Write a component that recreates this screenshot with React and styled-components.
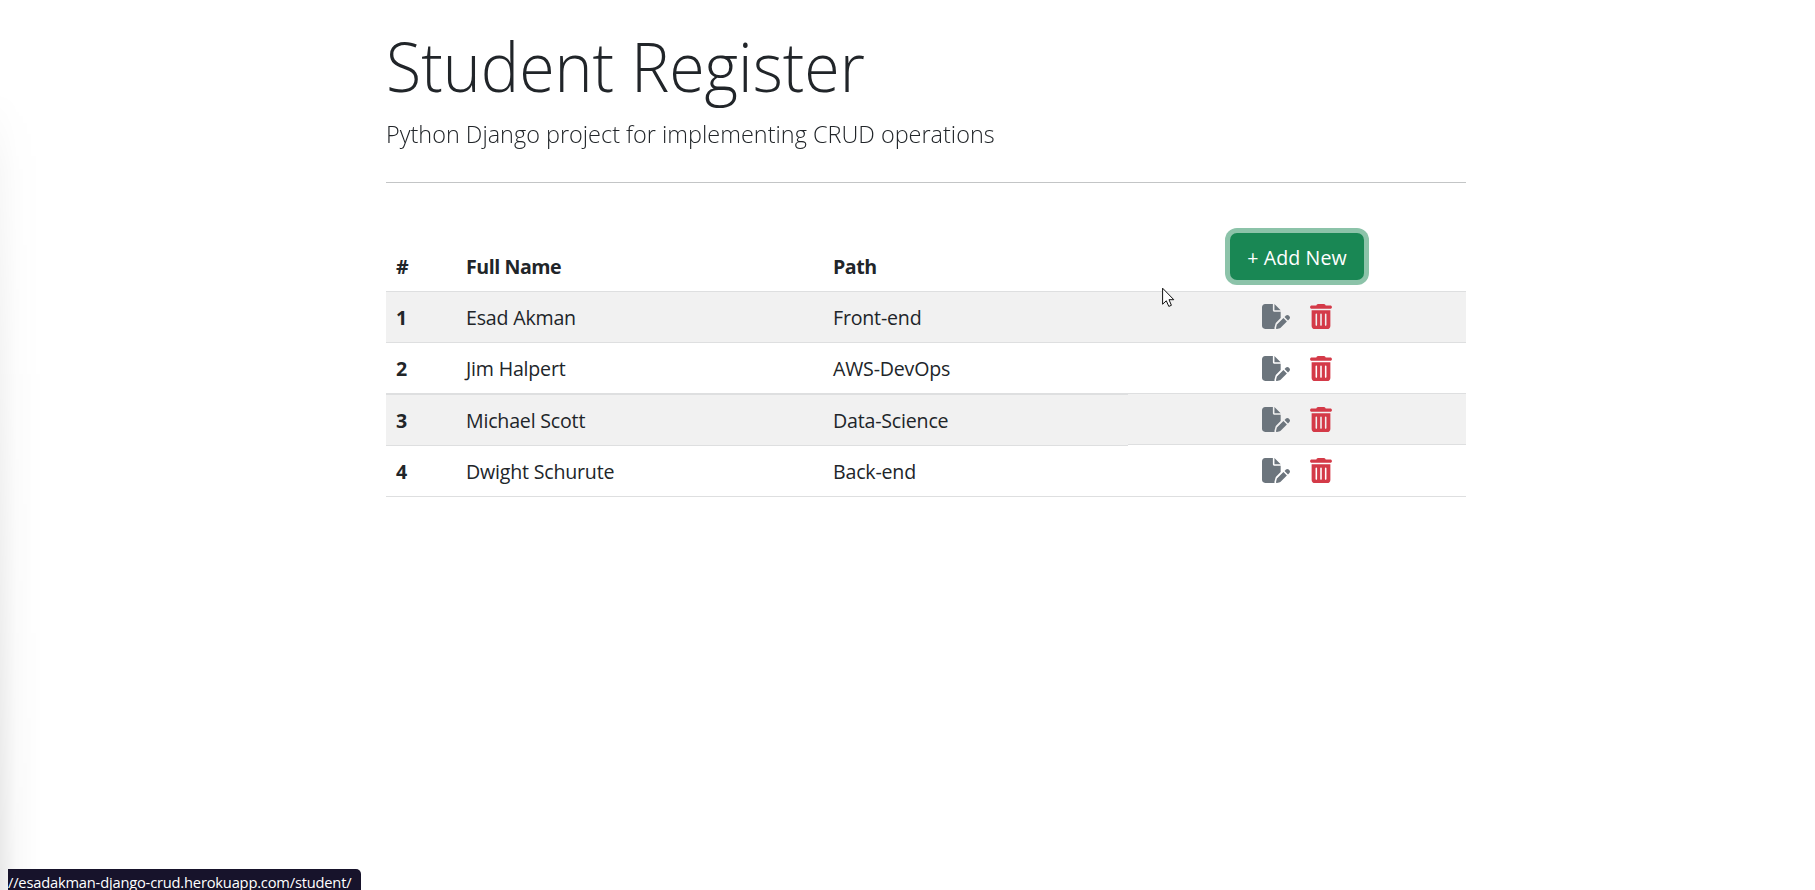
import React from "react";
import styled, { createGlobalStyle } from "styled-components";
import { FaFilePen, FaTrashCan } from "react-icons/fa6";

const GlobalStyle = createGlobalStyle`
  *, *::before, *::after { box-sizing: border-box; }
  body {
    margin: 0;
    background: #fff;
    color: #212529;
    font-family: "Open Sans", "Noto Sans", sans-serif;
    font-size: 19.6px;
    line-height: 30px;
    overflow: hidden;
  }
`;

const Page = styled.div`
  position: relative;
  height: 890px;
  overflow: hidden;
`;

const EdgeShadow = styled.div`
  position: absolute;
  left: 0;
  top: 90px;
  bottom: 0;
  width: 42px;
  background: linear-gradient(to right, rgba(0, 0, 0, 0.09), rgba(0, 0, 0, 0.025) 40%, transparent);
  mask-image: linear-gradient(to bottom, transparent, rgba(0, 0, 0, 0.3) 10%, #000);
`;

const Container = styled.main`
  width: 1080px;
  margin-left: 386px;
  padding-top: 23px;
`;

const Title = styled.h1`
  margin: 0;
  height: 84px;
  font-size: 68.5px;
  font-weight: 300;
  line-height: 85px;
  white-space: nowrap;
  transform: scaleX(0.941);
  transform-origin: left;
`;

const Lead = styled.p`
  margin: 8px 0 0;
  height: 38px;
  font-size: 24.5px;
  font-weight: 300;
  line-height: 38px;
  white-space: nowrap;
  transform: scaleX(0.957);
  transform-origin: left;
`;

const Divider = styled.hr`
  height: 1px;
  margin: 29px 0 39px;
  border: 0;
  background: #c3c5c6;
`;

const Row = styled.div`
  display: grid;
  grid-template-columns: 70px 367px 305px 338px;
  height: ${(p) => p.$height}px;
`;

const Cell = styled.div`
  display: flex;
  align-items: ${(p) => (p.$head ? "flex-end" : "center")};
  padding: ${(p) => (p.$head ? "0 10px 9px" : "2px 10px 0")};
  border-bottom: 1px solid #dedfe0;
  border-top: ${(p) => (p.$ruled ? "1px solid #dedfe0" : "0")};
  background: ${(p) => (p.$striped ? "#f1f1f1" : "#fff")};
  font-weight: ${(p) => (p.$bold ? 700 : 400)};
  letter-spacing: ${(p) => (p.$bold ? "-0.45px" : "-0.2px")};
  white-space: nowrap;
`;

const Actions = styled.div`
  display: flex;
  justify-content: center;
  align-items: flex-start;
  gap: 20px;
  height: ${(p) => p.$height}px;
  padding-top: ${(p) => (p.$head ? 11 : p.$offset)}px;
  border-bottom: 1px solid #dedfe0;
  background: ${(p) => (p.$striped ? "#f1f1f1" : "#fff")};
`;

const EditIcon = styled(FaFilePen)`
  width: 28px;
  height: 25px;
  color: #6c757d;
`;

const DeleteIcon = styled(FaTrashCan)`
  width: 22px;
  height: 25px;
  color: #d43a48;
`;

const AddButton = styled.button`
  width: 134px;
  height: 47px;
  padding: 3px 0 0;
  border: 0;
  border-radius: 7px;
  background: #198754;
  box-shadow: 0 0 0 5px #8cc3a9;
  color: #fff;
  font: inherit;
  letter-spacing: 0.1px;
`;

const StatusBar = styled.div`
  position: absolute;
  left: 8px;
  bottom: 0;
  width: 353px;
  height: 21px;
  border-top-right-radius: 5px;
  background: #17132b;
  color: #fff;
  font-size: 14.7px;
  line-height: 27px;
  letter-spacing: -0.2px;
  white-space: nowrap;
`;

const Pointer = styled.svg`
  position: absolute;
  left: 1162px;
  top: 287px;
  width: 13px;
  height: 21px;
`;

const STUDENTS = [
  { name: "Esad Akman", path: "Front-end", height: 51, offset: 12 },
  { name: "Jim Halpert", path: "AWS-DevOps", height: 51, offset: 13 },
  { name: "Michael Scott", path: "Data-Science", height: 52, ruled: true, offset: 13 },
  { name: "Dwight Schurute", path: "Back-end", height: 51, offset: 12 },
];

export default function App() {
  return (
    <Page>
      <GlobalStyle />
      <EdgeShadow />
      <Container>
        <Title>Student Register</Title>
        <Lead>Python Django project for implementing CRUD operations</Lead>
        <Divider />
        <Row $height={70}>
          <Cell $head $bold>#</Cell>
          <Cell $head $bold>Full Name</Cell>
          <Cell $head $bold>Path</Cell>
          <Actions $head $height={70}>
            <AddButton>+ Add New</AddButton>
          </Actions>
        </Row>
        {STUDENTS.map(({ name, path, height, ruled, offset }, i) => {
          const striped = i % 2 === 0;
          return (
            <Row key={name} $height={height}>
              <Cell $striped={striped} $ruled={ruled} $bold>{i + 1}</Cell>
              <Cell $striped={striped} $ruled={ruled}>{name}</Cell>
              <Cell $striped={striped} $ruled={ruled}>{path}</Cell>
              <Actions $striped={striped} $height={51} $offset={offset}>
                <EditIcon />
                <DeleteIcon />
              </Actions>
            </Row>
          );
        })}
      </Container>
      <Pointer viewBox="0 0 13 21">
        <path
          d="M0.6 1.2V17.2L4.3 13.8L6.8 19.4L9.4 18.3L7 12.7H11.8Z"
          fill="#fff"
          stroke="#111"
          strokeWidth="1"
        />
      </Pointer>
      <StatusBar>//esadakman-django-crud.herokuapp.com/student/</StatusBar>
    </Page>
  );
}
